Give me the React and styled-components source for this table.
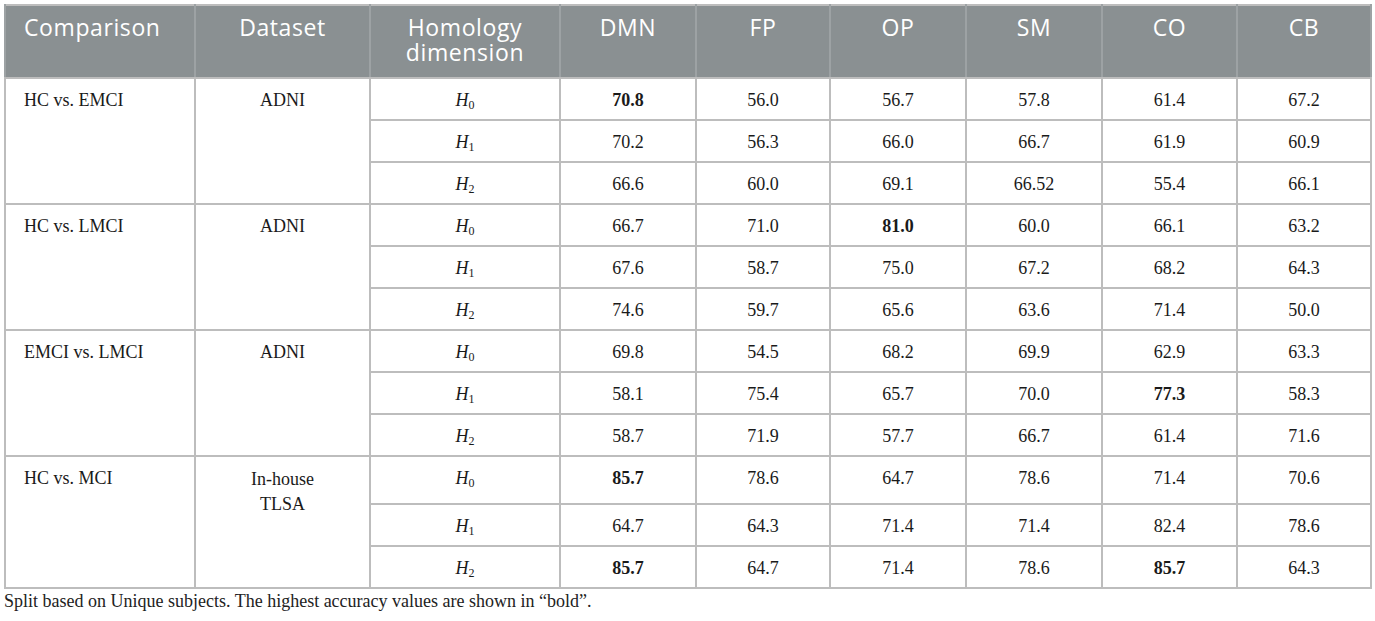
import React from "react";
import styled, { createGlobalStyle } from "styled-components";

const Global = createGlobalStyle`
  html, body { margin: 0; padding: 0; background: #ffffff; }
`;

const Page = styled.div`
  padding: 4px 5px 0 4px;
`;

const Table = styled.table`
  width: 1366px;
  table-layout: fixed;
  border-collapse: collapse;
  border: 2px solid #bdbdbd;
`;

const Col = styled.col`
  width: ${(p) => p.$w}px;
`;

const HeadCell = styled.th`
  background: #8a9092;
  color: #ffffff;
  font-family: "Open Sans", "Liberation Sans", sans-serif;
  font-weight: 400;
  font-size: 23px;
  letter-spacing: 0.6px;
  line-height: 25px;
  height: 73px;
  box-sizing: border-box;
  padding: 9px 8px 0;
  vertical-align: top;
  text-align: ${(p) => (p.$left ? "left" : "center")};
  padding-left: ${(p) => (p.$left ? "18px" : "8px")};
  border: 2px solid #9da2a4;
  border-top: none;
  border-bottom: 2px solid #bdbdbd;
`;

const HeadLine = styled.span`
  display: block;
`;

const Cell = styled.td`
  font-family: "Liberation Serif", "Times New Roman", serif;
  font-size: 18px;
  line-height: ${(p) => (p.$tall ? "25px" : "20px")};
  color: #1a1a1a;
  height: ${(p) => p.$h || 42}px;
  box-sizing: border-box;
  padding: ${(p) => (p.$tall ? "10px" : "11px")} 10px 0;
  vertical-align: top;
  text-align: ${(p) => (p.$left ? "left" : "center")};
  padding-left: ${(p) => (p.$left ? "18px" : "10px")};
  font-weight: ${(p) => (p.$bold ? 700 : 400)};
  border: 2px solid #bdbdbd;
`;

const HomItalic = styled.i`
  font-style: italic;
`;

const Sub = styled.sub`
  font-size: 12px;
  vertical-align: -3px;
  line-height: 0;
`;

const Caption = styled.p`
  margin: 1px 0 0;
  font-family: "Liberation Serif", "Times New Roman", serif;
  font-size: 18px;
  line-height: 22px;
  color: #222;
`;

const widths = [190, 175, 190, 136, 134, 136, 136, 135, 134];
const heads = ["DMN", "FP", "OP", "SM", "CO", "CB"];

const groups = [
  {
    cmp: "HC vs. EMCI",
    ds: ["ADNI"],
    rows: [
      ["70.8*", "56.0", "56.7", "57.8", "61.4", "67.2"],
      ["70.2", "56.3", "66.0", "66.7", "61.9", "60.9"],
      ["66.6", "60.0", "69.1", "66.52", "55.4", "66.1"],
    ],
  },
  {
    cmp: "HC vs. LMCI",
    ds: ["ADNI"],
    rows: [
      ["66.7", "71.0", "81.0*", "60.0", "66.1", "63.2"],
      ["67.6", "58.7", "75.0", "67.2", "68.2", "64.3"],
      ["74.6", "59.7", "65.6", "63.6", "71.4", "50.0"],
    ],
  },
  {
    cmp: "EMCI vs. LMCI",
    ds: ["ADNI"],
    rows: [
      ["69.8", "54.5", "68.2", "69.9", "62.9", "63.3"],
      ["58.1", "75.4", "65.7", "70.0", "77.3*", "58.3"],
      ["58.7", "71.9", "57.7", "66.7", "61.4", "71.6"],
    ],
  },
  {
    cmp: "HC vs. MCI",
    ds: ["In-house", "TLSA"],
    first: 48,
    rows: [
      ["85.7*", "78.6", "64.7", "78.6", "71.4", "70.6"],
      ["64.7", "64.3", "71.4", "71.4", "82.4", "78.6"],
      ["85.7*", "64.7", "71.4", "78.6", "85.7*", "64.3"],
    ],
  },
];

export default function App() {
  return (
    <Page>
      <Global />
      <Table>
        <colgroup>
          {widths.map((w, i) => (
            <Col key={i} $w={w} />
          ))}
        </colgroup>
        <thead>
          <tr>
            <HeadCell $left>Comparison</HeadCell>
            <HeadCell>Dataset</HeadCell>
            <HeadCell>
              <HeadLine>Homology</HeadLine>
              <HeadLine>dimension</HeadLine>
            </HeadCell>
            {heads.map((h) => (
              <HeadCell key={h}>{h}</HeadCell>
            ))}
          </tr>
        </thead>
        <tbody>
          {groups.map((g, gi) =>
            g.rows.map((r, ri) => {
              const h = ri === 0 && g.first ? g.first : 42;
              return (
                <tr key={`${gi}-${ri}`}>
                  {ri === 0 && (
                    <Cell $left rowSpan={3} $h={h}>
                      {g.cmp}
                    </Cell>
                  )}
                  {ri === 0 && (
                    <Cell rowSpan={3} $h={h} $tall={g.ds.length > 1}>
                      {g.ds.map((d, di) => (
                        <React.Fragment key={di}>
                          {di > 0 && <br />}
                          {d}
                        </React.Fragment>
                      ))}
                    </Cell>
                  )}
                  <Cell $h={h}>
                    <HomItalic>H</HomItalic>
                    <Sub>{ri}</Sub>
                  </Cell>
                  {r.map((v, vi) => {
                    const bold = v.endsWith("*");
                    return (
                      <Cell key={vi} $h={h} $bold={bold}>
                        {bold ? v.slice(0, -1) : v}
                      </Cell>
                    );
                  })}
                </tr>
              );
            })
          )}
        </tbody>
      </Table>
      <Caption>
        Split based on Unique subjects. The highest accuracy values are shown in “bold”.
      </Caption>
    </Page>
  );
}
